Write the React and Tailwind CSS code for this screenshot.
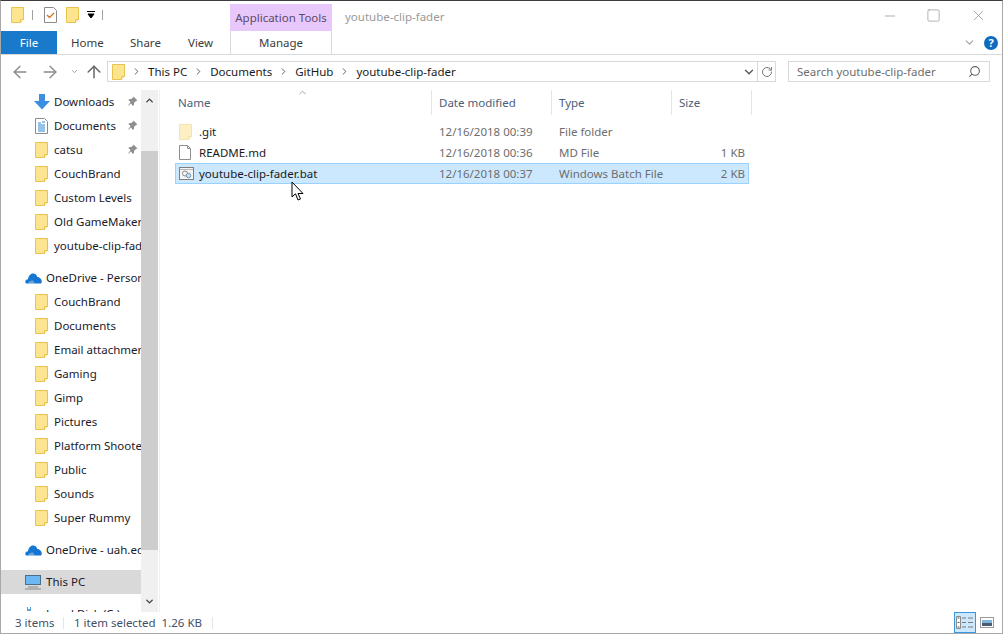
import React from 'react'
import { ArrowLeft, ArrowRight, ArrowUp, ChevronRight, ChevronDown, ChevronUp, RotateCw, Search, Minus, Square, X } from 'lucide-react'

const quickAccess = [
  { name: 'Downloads', icon: 'download', pin: true },
  { name: 'Documents', icon: 'docs', pin: true },
  { name: 'catsu', pin: true },
  { name: 'CouchBrand' },
  { name: 'Custom Levels' },
  { name: 'Old GameMaker' },
  { name: 'youtube-clip-fader' },
]

const oneDrive = ['CouchBrand', 'Documents', 'Email attachments', 'Gaming', 'Gimp', 'Pictures', 'Platform Shooter', 'Public', 'Sounds', 'Super Rummy']

const files = [
  { name: '.git', date: '12/16/2018 00:39', type: 'File folder', size: '', icon: 'folder' },
  { name: 'README.md', date: '12/16/2018 00:36', type: 'MD File', size: '1 KB', icon: 'file' },
  { name: 'youtube-clip-fader.bat', date: '12/16/2018 00:37', type: 'Windows Batch File', size: '2 KB', icon: 'bat', selected: true },
]

function Folder({ pale }) {
  return (
    <svg width="13" height="16" viewBox="0 0 13 16" className="shrink-0">
      <path d="M.5.5h12v12l-3 3H.5z" fill={pale ? '#fdf0c4' : '#fde58f'} stroke={pale ? '#f3e3ac' : '#e8c34e'} />
      <path d="M9.500 15.500v-3h3" fill="#fff8d8" stroke={pale ? '#f3e3ac' : '#e8c34e'} />
    </svg>
  )
}

function Cloud() {
  return (
    <svg width="17" height="11" viewBox="0 0 17 11" className="shrink-0">
      <path d="M1 10.500C-.5 8.500.5 6.500 3 6.200 3.500 2.500 6-.2 9 .6c2 .5 3 2 3.300 3.500 2.500 0 4.500 2.500 4.500 4.500 0 1-.5 1.900-1 1.900z" fill="#1676d2" />
      <path d="M3 10.500c.5-2 3-3.500 5-3l2 3z" fill="#fff" fillOpacity=".35" />
    </svg>
  )
}

function NavIcon({ type }) {
  if (type === 'download') {
    return (
      <svg width="16" height="16" viewBox="0 0 16 16" className="-ml-px shrink-0">
        <path d="M5 0h6v7h5l-8 8.500L0 7h5z" fill="#3c8fe0" />
      </svg>
    )
  }
  if (type === 'docs') {
    return (
      <svg width="13" height="16" viewBox="0 0 13 16" className="shrink-0">
        <path d="M.5.500h9l3 3v12H.500z" fill="#fff" stroke="#8a8a8a" />
        <path d="M3 5h3M7 4h3M3 7h7M3 9h7M3 11h7M3 13h7" stroke="#2f86d2" />
      </svg>
    )
  }
  return <Folder />
}

function Pin() {
  return (
    <svg width="11" height="11" viewBox="0 0 11 11" className="absolute left-[126px] top-[6px]">
      <path d="M6.500.5l4 4-1.500.5-2 2 0 2-1 1-2-2.500L.5 10.500 3.500 6 1.500 4l1-1 2 0 2-2z" fill="#8f8f8f" />
    </svg>
  )
}

function NavRow({ name, icon, pin }) {
  return (
    <div className="relative flex h-6 shrink-0 items-center pl-[34px]">
      <span className="flex w-[19px] shrink-0 items-center"><NavIcon type={icon} /></span>
      <span className="whitespace-nowrap text-[#1a1a2a]">{name}</span>
      {pin && <Pin />}
    </div>
  )
}

function FileIcon({ type }) {
  if (type === 'folder') return <Folder pale />
  if (type === 'file') {
    return (
      <svg width="12" height="15" viewBox="0 0 12 15" className="shrink-0">
        <path d="M.5.500h8l3 3v11H.500z" fill="#fff" stroke="#8f8f8f" />
        <path d="M8.500.500v3h3" fill="none" stroke="#8f8f8f" />
      </svg>
    )
  }
  return (
    <svg width="15" height="13" viewBox="0 0 15 13" className="shrink-0">
      <rect x=".5" y=".5" width="14" height="12" fill="#f4f4f4" stroke="#7f7f7f" />
      <path d="M1 2.500h13" stroke="#b8b8b8" />
      <circle cx="6" cy="6.500" r="2.500" fill="none" stroke="#8a8a8a" />
      <circle cx="9.500" cy="8.500" r="2.200" fill="#cfe3f3" stroke="#6f93b0" />
    </svg>
  )
}

function Crumb({ children }) {
  return (
    <>
      <ChevronRight size={11} strokeWidth={2} className="mx-[6px] shrink-0 text-[#555]" />
      <span className="whitespace-nowrap text-[#1a1a1a]">{children}</span>
    </>
  )
}

function HeaderCell({ label, className }) {
  return <div className={`flex h-[25px] items-center border-r border-[#e5e5e5] text-[#4c607a] ${className}`}>{label}</div>
}

export default function App() {
  return (
    <div className="relative flex h-[634px] w-[1003px] flex-col overflow-hidden border-x border-b border-t border-x-[#a8a8a8] border-b-[#a8a8a8] border-t-[#3c3c3c] bg-white font-['Noto_Sans',sans-serif] text-[11.5px] leading-none">
      {/* Title bar */}
      <div className="flex h-[30px] shrink-0 items-start">
        <div className="flex items-center pl-[10px] pt-[6px]">
          <Folder />
          <div className="ml-2 h-[10px] w-px bg-[#a0a0a0]" />
          <svg width="13" height="16" viewBox="0 0 13 16" className="ml-[11px] shrink-0">
            <path d="M.5.500h9l3 3v12H.500z" fill="#fff" stroke="#8a8a8a" />
            <path d="M3 8l2.500 2.500L10 6" fill="none" stroke="#c9762a" strokeWidth="1.300" />
          </svg>
          <div className="ml-[9px]"><Folder /></div>
          <svg width="8" height="8" viewBox="0 0 8 8" className="ml-2 shrink-0">
            <path d="M0 .5h8M1 3h6L4 7z" stroke="#000" fill="#000" />
          </svg>
          <div className="ml-[7px] h-[10px] w-px bg-[#a0a0a0]" />
        </div>
        <div className="ml-[127px] mt-[3px] flex h-[27px] w-[102px] items-center justify-center bg-[#e8c8fb] text-[#5c4a6a]">Application Tools</div>
        <div className="ml-[13px] mt-[10px] whitespace-nowrap text-[#9a9a9a]">youtube-clip-fader</div>
        <div className="ml-auto flex items-center pr-[15px] pt-[6px] text-[#7a7a7a]">
          <Minus size={16} strokeWidth={0.9} className="mr-[28px]" />
          <Square size={15} strokeWidth={0.9} className="mr-[29px]" />
          <X size={17} strokeWidth={0.9} />
        </div>
      </div>

      {/* Ribbon tabs */}
      <div className="flex h-[24px] shrink-0 items-stretch border-b border-[#d9d9d9] text-[#3c3c3c]">
        <div className="flex w-[56px] items-center justify-center bg-[#1979ca] text-white">File</div>
        <div className="flex w-[173px] items-center pl-[14px]">
          <span className="w-[59px]">Home</span>
          <span className="w-[58px]">Share</span>
          <span>View</span>
        </div>
        <div className="flex w-[102px] items-center justify-center border-x border-[#d9d9d9]">Manage</div>
        <div className="ml-auto flex items-center pr-[4px]">
          <ChevronDown size={13} className="mr-[8px] text-[#a0a0a0]" />
          <div className="flex h-[14px] w-[14px] items-center justify-center rounded-full bg-[#0f6cbd] text-[11px] font-bold text-white">?</div>
        </div>
      </div>

      {/* Address row */}
      <div className="flex h-[35px] shrink-0 items-start pl-[12px] pt-[6px]">
        <div className="flex h-[21px] w-[94px] items-center text-[#8a8a8a]">
          <ArrowLeft size={20} strokeWidth={1.6} className="-ml-[3px] shrink-0" />
          <ArrowRight size={20} strokeWidth={1.6} className="ml-[10px] shrink-0" />
          <ChevronDown size={9} strokeWidth={2} className="ml-[10px] shrink-0" />
          <ArrowUp size={20} strokeWidth={1.8} className="ml-[5px] shrink-0 text-[#666]" />
        </div>
        <div className="flex h-[21px] w-[669px] items-center border border-[#d9d9d9] pl-[4px]">
          <Folder />
          <Crumb>This PC</Crumb>
          <Crumb>Documents</Crumb>
          <Crumb>GitHub</Crumb>
          <Crumb>youtube-clip-fader</Crumb>
          <ChevronDown size={14} strokeWidth={2.2} className="ml-auto text-[#555]" />
          <div className="ml-[1px] flex h-full w-[18px] items-center justify-center border-l border-[#d9d9d9]">
            <RotateCw size={12} strokeWidth={2} className="text-[#777]" />
          </div>
        </div>
        <div className="ml-[12px] flex h-[21px] w-[202px] items-center justify-between border border-[#d9d9d9] pl-[8px] pr-[8px] text-[#6d6d6d]">
          <span className="whitespace-nowrap">Search youtube-clip-fader</span>
          <Search size={13} strokeWidth={2} className="-scale-x-100 text-[#666]" />
        </div>
      </div>

      {/* Body */}
      <div className="flex min-h-0 flex-1">
        <div className="flex w-[140px] shrink-0 flex-col gap-2 overflow-hidden">
          <div className="flex flex-col">
            {quickAccess.map(item => <NavRow key={item.name} {...item} />)}
          </div>
          <div className="flex flex-col">
            <div className="flex h-6 shrink-0 items-center whitespace-nowrap pl-[24px] text-[#1a1a2a]"><span className="w-[21px] shrink-0"><Cloud /></span>OneDrive - Personal</div>
            {oneDrive.map(name => <NavRow key={name} name={name} />)}
          </div>
          <div className="flex h-6 shrink-0 items-center whitespace-nowrap pl-[24px] text-[#1a1a2a]"><span className="w-[21px] shrink-0"><Cloud /></span>OneDrive - uah.edu</div>
          <div className="flex h-6 shrink-0 items-center whitespace-nowrap bg-[#d9d9d9] pl-[24px] text-[#1a1a2a]">
            <span className="w-[21px] shrink-0">
              <svg width="16" height="15" viewBox="0 0 16 15">
                <rect x=".5" y=".5" width="15" height="9" fill="#6cb8f2" stroke="#4a6f8c" />
                <path d="M3 12h10M0 14h16" stroke="#8a8a8a" />
              </svg>
            </span>
            This PC
          </div>
          <div className="flex h-6 shrink-0 items-center whitespace-nowrap pl-[24px] text-[#1a1a2a]">
            <span className="w-[21px] shrink-0">
              <svg width="16" height="14" viewBox="0 0 16 14">
                <path d="M2 4V0h1v2h2V0h1v4z" fill="#5aa5e0" />
              </svg>
            </span>
            Local Disk (C:)
          </div>
        </div>

        {/* Nav scrollbar */}
        <div className="flex w-[17px] shrink-0 flex-col bg-[#f0f0f0]">
          <div className="flex h-[61px] shrink-0 items-start justify-center pt-[5px] text-[#404040]"><ChevronUp size={11} strokeWidth={3} /></div>
          <div className="h-[399px] shrink-0 bg-[#cdcdcd]" />
          <div className="flex flex-1 items-end justify-center pb-[5px] text-[#404040]"><ChevronDown size={11} strokeWidth={3} /></div>
        </div>
        <div className="ml-px w-px shrink-0 bg-[#f0f0f0]" />

        {/* File list */}
        <div className="relative min-w-0 flex-1">
          <ChevronUp size={11} strokeWidth={1.5} className="absolute left-[137px] top-[-3px] text-[#777]" />
          <div className="flex">
            <HeaderCell label="Name" className="w-[272px] pl-[18px]" />
            <HeaderCell label="Date modified" className="w-[120px] pl-[7px]" />
            <HeaderCell label="Type" className="w-[120px] pl-[7px]" />
            <HeaderCell label="Size" className="w-[80px] pl-[7px]" />
          </div>
          <div className="ml-[15px] mt-[6px] flex w-[574px] flex-col">
            {files.map(f => (
              <div
                key={f.name}
                className={`flex h-[21px] items-center border ${f.selected ? 'border-[#99d1ff] bg-[#cce8ff]' : 'border-transparent'}`}
              >
                <div className="flex w-[263px] shrink-0 items-center pl-[3px]">
                  <span className="flex w-[20px] shrink-0 items-center"><FileIcon type={f.icon} /></span>
                  <span className="whitespace-nowrap text-[#1a1a1a]">{f.name}</span>
                </div>
                <div className="w-[120px] shrink-0 whitespace-nowrap text-[#6d6d6d]">{f.date}</div>
                <div className="w-[120px] shrink-0 whitespace-nowrap text-[#6d6d6d]">{f.type}</div>
                <div className="flex-1 pr-[3px] text-right text-[#6d6d6d]">{f.size}</div>
              </div>
            ))}
          </div>
        </div>
      </div>

      {/* Status bar */}
      <div className="flex h-[21px] shrink-0 items-center pl-[14px] text-[#3f4f66]">
        <span className="w-[48px]">3 items</span>
        <div className="h-[12px] w-px bg-[#e5e5e5]" />
        <span className="ml-[10px] whitespace-nowrap">1 item selected</span>
        <span className="ml-[6px] whitespace-nowrap">1.26 KB</span>
        <div className="ml-[10px] h-[12px] w-px bg-[#e5e5e5]" />
        <div className="ml-auto flex h-full items-center pr-[8px]">
          <div className="flex h-[21px] w-[22px] items-center justify-center border border-[#3a96dd] bg-[#cce8ff]">
            <svg width="18" height="13" viewBox="0 0 18 13">
              <path d="M.5.500h4v12h-4z" fill="#fff" stroke="#8a8a8a" />
              <path d="M1.500 2h2M1.500 6.500h2M1.500 11h2" stroke="#555" />
              <path d="M6 2h4M12 2h5M6 6.500h4M12 6.500h5M6 11h4M12 11h5" stroke="#7a7a7a" />
            </svg>
          </div>
          <svg width="14" height="11" viewBox="0 0 14 11" className="ml-[4px]">
            <rect x=".5" y=".5" width="13" height="10" fill="#fff" stroke="#9a9a9a" />
            <rect x="2" y="3" width="10" height="3" fill="#7fb5de" />
            <rect x="2" y="6" width="10" height="3" fill="#4a5a72" />
          </svg>
        </div>
      </div>

      {/* Mouse cursor */}
      <svg width="14" height="21" viewBox="0 0 14 21" className="absolute left-[290px] top-[180px]">
        <path d="M1 1v15l3.500-3.200L7 19l2.500-1-2.500-5.500h5z" fill="#fff" stroke="#000" strokeWidth="1" />
      </svg>
    </div>
  )
}
